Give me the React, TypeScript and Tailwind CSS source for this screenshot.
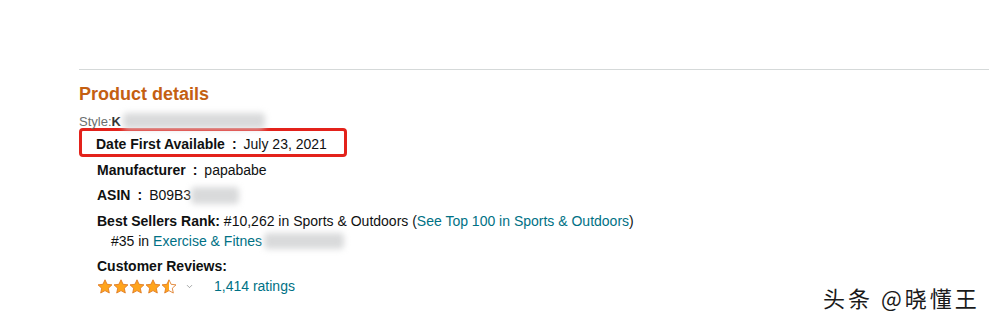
import React from "react";
import { ChevronDown } from "lucide-react";

const font = { fontFamily: '"Liberation Sans", Arial, sans-serif' };

const Blur = ({ className }: { className: string }) => (
  <span className={`inline-block align-middle rounded-sm bg-[#d9dadb] blur-[3px] ${className}`} />
);

const Star = ({ half = false }: { half?: boolean }) => (
  <svg width="16" height="15" viewBox="0 0 24 23">
    <defs>
      <linearGradient id="halfStar">
        <stop offset="50%" stopColor="#ffa41c" />
        <stop offset="50%" stopColor="#ffffff" />
      </linearGradient>
    </defs>
    <path
      d="M12 1.2l3.2 6.9 7.5.9-5.6 5.1 1.5 7.4L12 17.8l-6.6 3.7 1.5-7.4L1.3 9l7.5-.9z"
      fill={half ? "url(#halfStar)" : "#ffa41c"}
      stroke="#de7921"
      strokeWidth="1.3"
      strokeLinejoin="round"
    />
  </svg>
);

export default function App() {
  return (
    <div className="relative w-[989px] h-[322px] bg-white overflow-hidden text-[#0f1111]" style={font}>
      <div className="pt-[69px] pl-[79px]">
        <div className="border-t border-[#d5d9d9]" />
        <h2 className="mt-[12px] text-[18px] leading-[24px] font-bold text-[#c45f12]">Product details</h2>

        <div className="mt-[6px] h-[16px] text-[13px] leading-[19px] text-[#6b6f6f] whitespace-nowrap">
          Style:<span className="font-bold text-[#333]">K</span>
          <Blur className="w-[142px] h-[16px] -mt-[4px] ml-[2px]" />
        </div>

        <ul className="text-[14px] leading-[20px]">
          <li className="w-[268px] h-[29px] border-[3px] border-[#e3221b] rounded-[4px] pl-[14px] pt-[3px]">
            <span className="font-bold">Date First Available</span>
            <span className="font-bold mx-[7px]">:</span>
            <span>July 23, 2021</span>
          </li>
          <li className="mt-[3px] pl-[18px]">
            <span className="font-bold">Manufacturer</span>
            <span className="font-bold mx-[7px]">:</span>
            <span>papababe</span>
          </li>
          <li className="mt-[5px] pl-[18px] whitespace-nowrap">
            <span className="font-bold">ASIN</span>
            <span className="font-bold mx-[7px]">:</span>
            <span>B09B3</span>
            <Blur className="w-[48px] h-[17px] -mt-[2px]" />
          </li>
          <li className="mt-[6px] pl-[18px] whitespace-nowrap">
            <span className="font-bold">Best Sellers Rank:</span> #10,262 in Sports &amp; Outdoors (
            <span className="text-[#007185]">See Top 100 in Sports &amp; Outdoors</span>)
          </li>
          <li className="pl-[32px] whitespace-nowrap">
            #35 in <span className="text-[#007185]">Exercise &amp; Fitnes</span>
            <Blur className="w-[80px] h-[16px] -mt-[2px] ml-[2px]" />
          </li>
          <li className="mt-[5px] pl-[18px]">
            <span className="font-bold">Customer Reviews:</span>
          </li>
          <li className="pl-[18px] h-[20px] flex items-center">
            <span className="flex">
              <Star />
              <Star />
              <Star />
              <Star />
              <Star half />
            </span>
            <ChevronDown size={9} strokeWidth={1.6} className="ml-[8px] mt-[1px] text-[#6b6f6f]" />
            <span className="ml-[20px] text-[#007185]">1,414 ratings</span>
          </li>
        </ul>
      </div>

      <div
        className="absolute left-[823px] top-[282px] text-[22px] leading-[30px] tracking-[3px] text-[#1a1a1a] [text-shadow:1px_1px_0_#fff,-1px_-1px_0_#fff]"
        style={{ fontFamily: '"Noto Sans CJK SC", sans-serif' }}
      >
        头条 @晓懂王
      </div>
    </div>
  );
}
